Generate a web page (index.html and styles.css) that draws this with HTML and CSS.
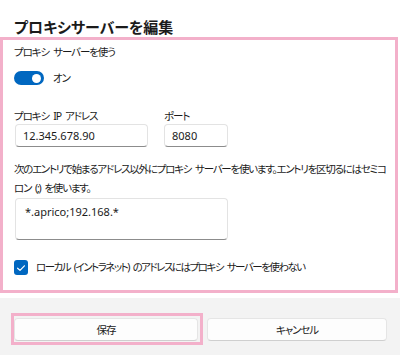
FILE: index.html
```html
<!DOCTYPE html>
<html lang="ja">
<head>
<meta charset="utf-8">
<link rel="stylesheet" href="styles.css">
</head>
<body>
<div class="dialog">
  <h1 class="title">プロキシサーバーを編集</h1>
  <div class="panel">
    <div class="label">プロキシ サーバーを使う</div>
    <div class="toggle-row">
      <span class="toggle"><span class="knob"></span></span>
      <span class="toggle-text">オン</span>
    </div>
    <div class="fields">
      <div class="field">
        <div class="label">プロキシ IP アドレス</div>
        <div class="input ip">12.345.678.90</div>
      </div>
      <div class="field">
        <div class="label">ポート</div>
        <div class="input port">8080</div>
      </div>
    </div>
    <p class="desc">次のエントリで始まるアドレス以外にプロキシ サーバーを使います。エントリを区切るにはセミコロン (;) を使います。</p>
    <div class="textarea">*.aprico;192.168.*</div>
    <div class="check-row">
      <span class="checkbox">
        <svg width="10" height="10" viewBox="0 0 10 10"><polyline points="1.6,5.2 4,7.4 8.4,2.8" fill="none" stroke="#fff" stroke-width="1.2" stroke-linecap="round" stroke-linejoin="round"/></svg>
      </span>
      <span class="check-text">ローカル (イントラネット) のアドレスにはプロキシ サーバーを使わない</span>
    </div>
  </div>
  <div class="footer">
    <div class="highlight"><button class="btn">保存</button></div>
    <button class="btn cancel">キャンセル</button>
  </div>
</div>
</body>
</html>
```
FILE: styles.css
```css
html, body {
  margin: 0;
  padding: 0;
  background: #ffffff;
}
body {
  width: 400px;
  height: 355px;
  overflow: hidden;
  font-family: "Noto Sans", "Noto Sans CJK JP", sans-serif;
  font-feature-settings: "palt";
  color: #1b1b1b;
}
.dialog {
  display: flex;
  flex-direction: column;
  height: 355px;
}
.title {
  margin: 0;
  padding: 18px 14px 0;
  font-size: 15px;
  line-height: 18px;
  font-weight: 600;
  font-family: "Noto Sans CJK JP", sans-serif;
  font-feature-settings: "palt";
}
.panel {
  margin-top: 1px;
  width: 398px;
  height: 256px;
  box-sizing: border-box;
  border: 3px solid #f3b0ca;
  padding: 4px 9px 0 11px;
  display: flex;
  flex-direction: column;
}
.label, .toggle-text, .desc, .check-text, .btn {
  font-family: "Noto Sans", "Noto Sans CJK JP", sans-serif;
  font-feature-settings: "palt";
  font-size: 10.5px;
  letter-spacing: -1.1px;
  word-spacing: 2.5px;
}
.label {
  line-height: 16px;
}
.toggle-row {
  margin-top: 11px;
  display: flex;
  align-items: center;
  gap: 9px;
  height: 14px;
}
.toggle {
  width: 30px;
  height: 14px;
  border-radius: 7px;
  background: #0067c0;
  position: relative;
  display: block;
}
.knob {
  position: absolute;
  right: 3px;
  top: 2.5px;
  width: 9px;
  height: 9px;
  border-radius: 50%;
  background: #fff;
}
.toggle-text {
  line-height: 14px;
}
.fields {
  margin-top: 23px;
  display: flex;
  gap: 16px;
}
.field {
  display: flex;
  flex-direction: column;
}
.input, .textarea {
  box-sizing: border-box;
  background: #fff;
  border: 1px solid #e3e3e3;
  border-bottom: 1px solid #8c8c8c;
  border-radius: 4px;
  font-family: "Noto Sans", sans-serif;
  font-size: 11px;
  color: #1b1b1b;
}
.input {
  height: 23px;
  line-height: 21px;
  padding-left: 7px;
  margin-left: 1px;
}
.ip { width: 133px; }
.port { width: 64px; margin-left: 0; }
.desc {
  margin: 13px 0 0;
  line-height: 19px;
  letter-spacing: -1.25px;
}
.textarea {
  margin-top: 0;
  margin-left: 1px;
  width: 213px;
  height: 42px;
  padding: 5px 9px;
  line-height: 16px;
}
.check-row {
  margin-top: 20px;
  display: flex;
  align-items: center;
  gap: 8px;
}
.checkbox {
  width: 14px;
  height: 15px;
  border-radius: 3px;
  background: #0067c0;
  display: flex;
  align-items: center;
  justify-content: center;
}
.check-text {
  line-height: 15px;
  letter-spacing: -1.5px;
}
.footer {
  margin-top: 5px;
  flex: 1;
  background: #f3f3f3;
  display: flex;
  align-items: flex-start;
  padding: 15px 0 0 11px;
  gap: 4px;
}
.highlight {
  border: 3px solid #f3b0ca;
  padding: 2px 2px 1px 0;
  display: flex;
}
.btn {
  width: 184px;
  height: 23px;
  box-sizing: border-box;
  background: #fdfdfd;
  border: 1px solid #e5e5e5;
  border-bottom-color: #cfcfcf;
  border-radius: 4px;
  color: #1b1b1b;
  padding: 0;
  margin: 0;
}
.cancel {
  width: 180px;
  margin-top: 5px;
}
```
